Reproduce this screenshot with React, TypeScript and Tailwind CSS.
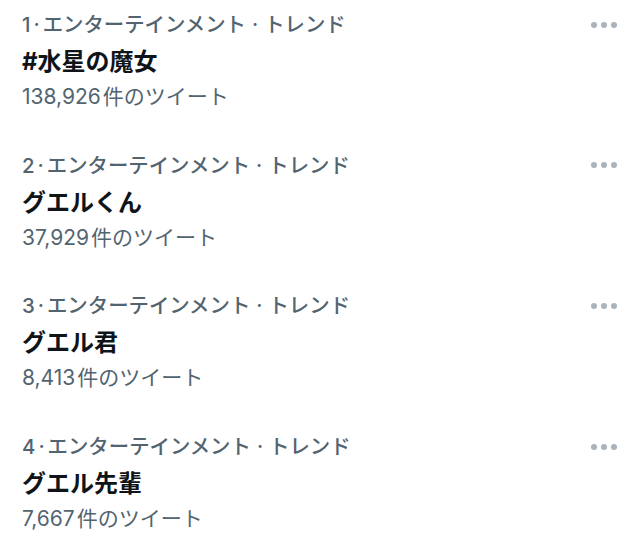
const trends = [
  { rank: 1, title: "#水星の魔女", count: "138,926" },
  { rank: 2, title: "グエルくん", count: "37,929" },
  { rank: 3, title: "グエル君", count: "8,413" },
  { rank: 4, title: "グエル先輩", count: "7,667" },
];

function MoreIcon() {
  return (
    <svg width="28" height="8" viewBox="0 0 28 8" className="text-[#aab3bb]">
      <circle cx="4" cy="4" r="3" fill="currentColor" />
      <circle cx="14" cy="4" r="3" fill="currentColor" />
      <circle cx="24" cy="4" r="3" fill="currentColor" />
    </svg>
  );
}

export default function App() {
  return (
    <div
      className="w-[640px] h-[550px] bg-white overflow-hidden"
      style={{ fontFamily: 'Inter, "Noto Sans CJK JP", sans-serif' }}
    >
      {trends.map((t) => (
        <div key={t.rank} className="flex justify-between pl-[22px] pr-[22px] pt-[5px] pb-[26.7px]">
          <div className="flex flex-col">
            <div className="text-[20.4px] leading-[39px] text-[#536471] font-medium whitespace-nowrap">
              {t.rank}
              <span className="mx-[3px]">·</span>
              エンターテインメント
              <span className="mx-[6px]">·</span>
              トレンド
            </div>
            <div className="text-[24px] leading-[36px] font-bold text-[#0f1419]">{t.title}</div>
            <div className="text-[21px] leading-[34px] text-[#536471]">
              {t.count}
              <span className="ml-[2px]">件のツイート</span>
            </div>
          </div>
          <div className="h-[39px] flex items-center">
            <MoreIcon />
          </div>
        </div>
      ))}
    </div>
  );
}
